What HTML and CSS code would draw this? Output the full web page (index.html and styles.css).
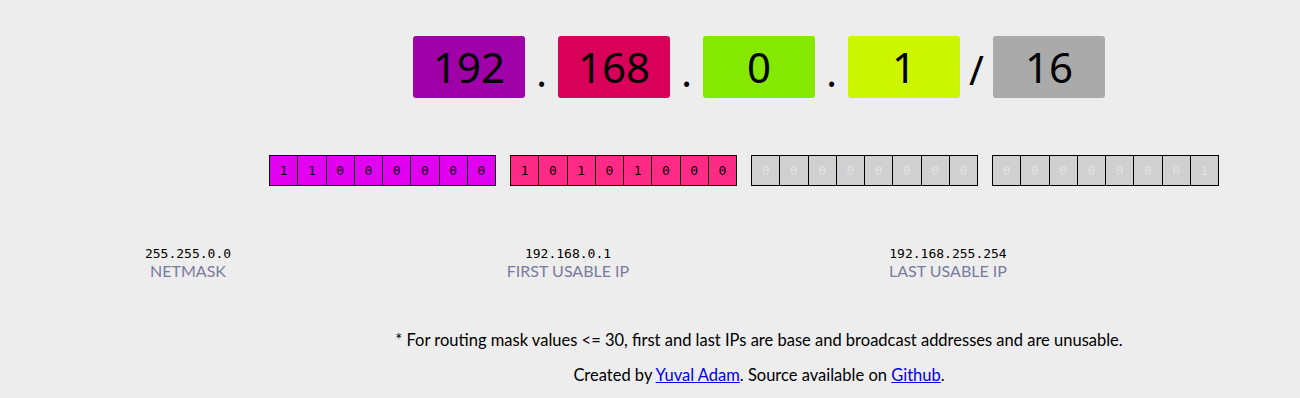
FILE: index.html
```html
<!DOCTYPE html>
<html lang="en">
<head>
  <meta charset="UTF-8">
  <title>IP Calculator</title>
  <link rel="stylesheet" href="styles.css">
</head>
<body>

  <div class="main">
    <div class="ip-row">
      <div class="octet o1">192</div>
      <span class="sep">.</span>
      <div class="octet o2">168</div>
      <span class="sep">.</span>
      <div class="octet o3">0</div>
      <span class="sep">.</span>
      <div class="octet o4">1</div>
      <span class="sep slash">/</span>
      <div class="octet mask">16</div>
    </div>

    <div class="bits-row">
      <div class="bits b1">
        <span>1</span><span>1</span><span>0</span><span>0</span><span>0</span><span>0</span><span>0</span><span>0</span>
      </div>
      <div class="bits b2">
        <span>1</span><span>0</span><span>1</span><span>0</span><span>1</span><span>0</span><span>0</span><span>0</span>
      </div>
      <div class="bits off">
        <span>0</span><span>0</span><span>0</span><span>0</span><span>0</span><span>0</span><span>0</span><span>0</span>
      </div>
      <div class="bits off">
        <span>0</span><span>0</span><span>0</span><span>0</span><span>0</span><span>0</span><span>0</span><span>1</span>
      </div>
    </div>
  </div>

  <div class="results">
    <div class="result">
      <div class="value">255.255.0.0</div>
      <div class="label">NETMASK</div>
    </div>
    <div class="result">
      <div class="value">192.168.0.1</div>
      <div class="label">FIRST USABLE IP</div>
    </div>
    <div class="result">
      <div class="value">192.168.255.254</div>
      <div class="label">LAST USABLE IP</div>
    </div>
  </div>

  <div class="main footer">
    <p class="note">* For routing mask values &lt;= 30, first and last IPs are base and broadcast addresses and are unusable.</p>
    <p class="credits">Created by <a href="#">Yuval Adam</a>. Source available on <a href="#">Github</a>.</p>
  </div>

</body>
</html>
```

FILE: styles.css
```css
body {
  margin: 0;
  background: #ededed;
  font-family: 'Lato', 'Noto Sans', sans-serif;
  color: #000;
}

.main {
  padding-left: 218px;
  text-align: center;
}

.ip-row {
  display: flex;
  justify-content: center;
  align-items: flex-end;
  padding-top: 36px;
}

.octet {
  width: 112px;
  height: 62px;
  line-height: 62px;
  border-radius: 3px;
  font-size: 42px;
  font-family: 'Noto Sans', sans-serif;
}

.o1 { background: #a000a8; }
.o2 { background: #d9005a; }
.o3 { background: #84e800; }
.o4 { background: #ccf600; }
.mask { background: #aaaaaa; }

.sep {
  width: 33px;
  font-size: 40px;
  line-height: 52px;
  font-family: 'Noto Sans', sans-serif;
}

.slash {
  line-height: 56px;
}

.bits-row {
  display: flex;
  justify-content: center;
  gap: 14px;
  margin-top: 57px;
  margin-right: 30px;
}

.bits {
  display: flex;
  border-right: 1px solid #000;
}

.bits span {
  width: 27.25px;
  height: 29px;
  line-height: 29px;
  border: 1px solid #000;
  border-right: none;
  font-family: 'DejaVu Sans Mono', monospace;
  font-size: 13px;
}

.b1 span { background: #e100f0; }
.b2 span { background: #ff2a85; }
.off span {
  background: #d0d0d0;
  color: #e2e2e2;
}

.results {
  display: flex;
  margin-top: 60px;
  margin-left: -2px;
}

.result {
  width: 380px;
  text-align: center;
}

.value {
  font-family: 'DejaVu Sans Mono', monospace;
  font-size: 13px;
  line-height: 16px;
}

.label {
  color: #7a7a9e;
  font-size: 16px;
  line-height: 18px;
}

.footer {
  margin-top: 48px;
}

.note {
  margin: 0;
  font-size: 16.5px;
  line-height: 24px;
}

.credits {
  margin: 11px 0 0;
  font-size: 16.5px;
  line-height: 24px;
}

.credits a {
  color: #0000ee;
}
```
